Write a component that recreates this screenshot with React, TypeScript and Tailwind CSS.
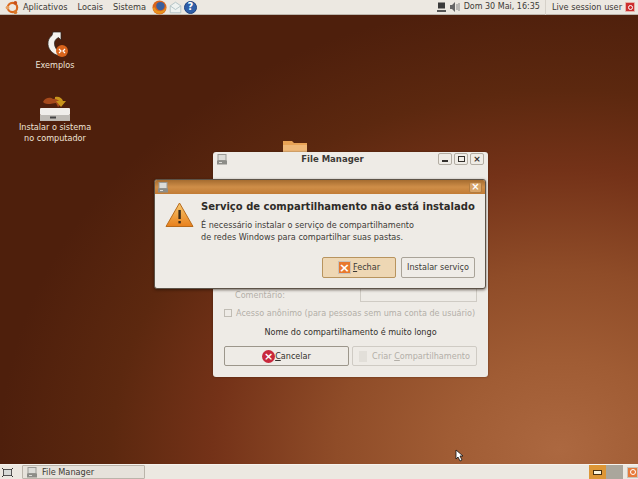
import React from "react";

const F = "font-['DejaVu_Sans',sans-serif]";

function Ubuntu() {
  return (
    <svg width="15" height="15" viewBox="0 0 24 24" className="shrink-0">
      <circle cx="12" cy="12" r="7.5" fill="none" stroke="#d9691e" strokeWidth="3.5" />
      <circle cx="4" cy="12" r="3" fill="#e8a060" />
      <circle cx="16.5" cy="4.5" r="3" fill="#c8501a" />
      <circle cx="16.5" cy="19.5" r="3" fill="#d9792a" />
    </svg>
  );
}

function Firefox() {
  return (
    <svg width="15" height="15" viewBox="0 0 16 16" className="shrink-0">
      <circle cx="8" cy="8" r="7.5" fill="#d9641c" />
      <circle cx="9" cy="6.5" r="4.5" fill="#3a5f9e" />
      <path d="M1 9c1 5 6 7 10 5 3-1 4-4 4-7-1 3-3 5-6 5-3 0-5-1-6-4-1 0-2 0-2 1z" fill="#e8941e" />
    </svg>
  );
}

function Mail() {
  return (
    <svg width="13" height="13" viewBox="0 0 16 16" className="shrink-0">
      <path d="M1.5 6 8 1.5 14.5 6v8.5h-13z" fill="#eef2f0" stroke="#a9bcc0" />
      <path d="M1.5 6 8 10.5 14.5 6" fill="none" stroke="#a9bcc0" />
    </svg>
  );
}

function Help() {
  return (
    <div className="w-[13px] h-[13px] rounded-full bg-[#2f5fa8] border border-[#1f4280] flex items-center justify-center text-white text-[10px] font-bold leading-none shrink-0">
      ?
    </div>
  );
}

function TopPanel() {
  return (
    <div className={`${F} h-[15px] shrink-0 bg-[#ece8e1] flex items-center text-[8.2px] text-[#3c3a36] border-b border-[#bdb6ad]`}>
      <div className="flex items-center pl-[5px] w-[147px]">
        <Ubuntu />
        <span className="ml-[3px]">Aplicativos</span>
        <span className="ml-[10px]">Locais</span>
        <span className="ml-[10px]">Sistema</span>
      </div>
      <div className="flex items-center gap-[2px] ml-[5px]">
        <Firefox />
        <Mail />
        <Help />
      </div>
      <div className="ml-auto flex items-center">
        <svg width="9" height="10" viewBox="0 0 9 10" className="mr-[4px]">
          <rect x="1" y="0.5" width="7" height="6" fill="#3a3a3a" />
          <rect x="0" y="8" width="9" height="2" fill="#555" />
        </svg>
        <svg width="11" height="10" viewBox="0 0 11 10" className="mr-[3px]">
          <path d="M0 3h2l3-3v10L2 7H0z" fill="#666" />
          <path d="M7 2l0 6M9 1l0 8" stroke="#888" strokeWidth="1" />
        </svg>
        <span className="text-[8px]">Dom 30 Mai, 16:35</span>
        <div className="w-px h-[15px] bg-[#d6d1c9] mx-[5px]" />
        <span className="ml-[1px]">Live session user</span>
        <div className="w-[10px] h-[10px] ml-[3px] mr-[3px] bg-[#cc2f2f] border border-[#e8b0a8] rounded-[1px] flex items-center justify-center">
          <div className="w-[5px] h-[5px] rounded-full border border-white" />
        </div>
      </div>
    </div>
  );
}

function BottomPanel() {
  return (
    <div className={`${F} h-[15px] shrink-0 bg-[#ece8e1] border-t border-[#f6f3ee] flex items-center text-[8.2px] text-[#3c3a36]`}>
      <svg width="11" height="9" viewBox="0 0 11 9" className="ml-[2px]">
        <rect x="1.5" y="1.5" width="8" height="6" fill="#d8dbd8" stroke="#555" />
        <path d="M0 0l2 2M11 0L9 2M0 9l2-2M11 9L9 7" stroke="#333" />
      </svg>
      <div className="ml-[9px] w-[123px] h-[14px] bg-[#e6e2db] border border-[#bab4aa] rounded-[1px] flex items-center pl-[4px]">
        <WinIcon />
        <span className="ml-[5px]">File Manager</span>
      </div>
      <div className="ml-auto flex items-center h-full">
        <div className="w-[17px] h-full bg-[#dd9636] flex items-center justify-center">
          <div className="w-[9px] h-[5px] bg-[#fbf4dc] border border-[#4a3010]" />
        </div>
        <div className="w-[17px] h-full bg-[#aaa69c]" />
        <div className="w-[4px]" />
        <div className="w-[11px] h-[11px] bg-[#e87a3a] border border-[#c9c2b8] flex items-center justify-center">
          <div className="w-[6px] h-[6px] rounded-full border border-white" />
        </div>
      </div>
    </div>
  );
}

function WinIcon() {
  return (
    <svg width="10" height="11" viewBox="0 0 10 11" className="shrink-0">
      <rect x="1" y="0.5" width="8" height="6" fill="#dcdcd8" stroke="#9a9a96" />
      <rect x="0" y="6.5" width="10" height="4" fill="#8d8d88" />
      <rect x="2" y="8" width="3" height="1" fill="#dcdcd8" />
    </svg>
  );
}

function WinButton({ children }: { children: React.ReactNode }) {
  return (
    <div className="w-[14px] h-[12px] border border-[#b3ada3] bg-[#efece6] rounded-[2px] flex items-center justify-center text-[#33302c] text-[9px] font-bold leading-none">
      {children}
    </div>
  );
}

function FileManager() {
  return (
    <div className={`${F} absolute left-[213px] top-[137px] w-[275px] h-[225px] bg-[#eeebe6] rounded-[3px] shadow-[0_0_2px_rgba(40,20,10,0.6)] flex flex-col text-[8.1px] text-[#3c3a36]`}>
      <div className="h-[12px] mt-px flex items-center px-[4px]">
        <WinIcon />
        <div className="flex-1 text-center font-bold text-[8.5px] text-[#3c3a36]">File Manager</div>
        <div className="flex gap-[2px]">
          <WinButton><div className="w-[6px] h-[2px] bg-[#33302c] mt-[4px]" /></WinButton>
          <WinButton><div className="w-[7px] h-[6px] border border-[#33302c]" /></WinButton>
          <WinButton>×</WinButton>
        </div>
      </div>
      <div className="mt-auto flex flex-col px-[11px] pb-[11px] text-[#b3afa8]">
        <div className="flex items-center justify-between pl-[11px] pr-0">
          <span>Comentário:</span>
          <div className="w-[117px] h-[14px] border border-[#cfcbc4] bg-[#eeebe6]" />
        </div>
        <div className="flex items-center mt-[5px] whitespace-nowrap">
          <div className="w-[8px] h-[8px] border border-[#c0bcb4] mr-[4px] shrink-0" />
          <span>Acesso anônimo (para pessoas sem uma conta de usuário)</span>
        </div>
        <div className="text-center text-[#33302c] mt-[7px] h-[12px] leading-[12px]">Nome do compartilhamento é muito longo</div>
        <div className="flex justify-between mt-[8px]">
          <div className="w-[125px] h-[20px] border border-[#9c968b] rounded-[2px] bg-[#eeebe6] flex items-center justify-center text-[#33302c]">
            <div className="w-[13px] h-[13px] rounded-full bg-[#c8283c] text-white flex items-center justify-center text-[11px] font-bold leading-none">×</div>
            <span><u>C</u>ancelar</span>
          </div>
          <div className="w-[125px] h-[20px] border border-[#cfcbc4] rounded-[2px] flex items-center justify-center">
            <span className="mr-[5px] w-[8px] h-[11px] bg-[#e2dfd9] block" />
            <span>Criar <u>C</u>ompartilhamento</span>
          </div>
        </div>
      </div>
    </div>
  );
}

function Alert() {
  return (
    <div className={`${F} absolute left-[154px] top-[164px] w-[332px] h-[110px] bg-[#eeebe6] rounded-[3px] border border-[#5d5348] shadow-[0_1px_3px_rgba(30,15,5,0.6)] flex flex-col text-[8.1px] text-[#3c3a36]`}>
      <div className="h-[14px] shrink-0 bg-gradient-to-b from-[#a56c30] via-[#cf8e48] to-[#c27c35] flex items-center justify-between px-[3px] rounded-t-[2px]">
        <WinIcon />
        <div className="w-[13px] h-[11px] bg-[#d8a468] border border-[#b27c40] rounded-[2px] text-white text-[10px] font-bold leading-none flex items-center justify-center">×</div>
      </div>
      <div className="flex pl-[10px] pt-[6px] pr-[10px]">
        <svg width="29" height="26" viewBox="0 0 29 26" className="shrink-0 mt-[2px]">
          <defs>
            <linearGradient id="w" x1="0" y1="0" x2="0" y2="1">
              <stop offset="0" stopColor="#f6c870" />
              <stop offset="1" stopColor="#e8801c" />
            </linearGradient>
          </defs>
          <path d="M14.5 1 28 24.5H1z" fill="url(#w)" stroke="#b86a1a" strokeLinejoin="round" />
          <rect x="13.4" y="8" width="2.4" height="9" fill="#3a2a18" />
          <rect x="13.4" y="19" width="2.4" height="2.4" fill="#3a2a18" />
        </svg>
        <div className="ml-[7px] whitespace-nowrap">
          <div className="font-bold text-[10px] leading-[14px] text-[#2e2c28]">Serviço de compartilhamento não está instalado</div>
          <div className="mt-[6px] leading-[11.5px]">
            É necessário instalar o serviço de compartilhamento
            <br />
            de redes Windows para compartilhar suas pastas.
          </div>
        </div>
      </div>
      <div className="mt-auto mb-[10px] mr-[10px] flex justify-end gap-[5px]">
        <div className="w-[74px] h-[21px] border border-[#b8945e] rounded-[2px] bg-[#eed7b4] flex items-center justify-center">
          <div className="w-[13px] h-[13px] bg-[#e8782c] border border-[#c9c2b8] text-white text-[13px] font-bold leading-none flex items-center justify-center mr-[2px]">×</div>
          <span><u>F</u>echar</span>
        </div>
        <div className="w-[74px] h-[21px] border border-[#a9a398] rounded-[2px] bg-[#efece7] flex items-center justify-center">Instalar serviço</div>
      </div>
    </div>
  );
}

function DesktopIcon({ icon, label, className }: { icon: React.ReactNode; label: React.ReactNode; className: string }) {
  return (
    <div className={`${F} absolute flex flex-col items-center text-[8.1px] leading-[10.5px] text-center text-[#eee3d6] whitespace-nowrap ${className}`}>
      {icon}
      <div>{label}</div>
    </div>
  );
}

export default function App() {
  return (
    <div className="w-[638px] h-[479px] overflow-hidden flex flex-col bg-[#4e1f0c]">
      <TopPanel />
      <div className="relative flex-1 bg-[radial-gradient(ellipse_560px_450px_at_560px_435px,#ac6840_0%,#a05c34_20%,#8f4c28_40%,#743218_62%,#5c280f_80%,#4e1f0c_100%)]">
        <DesktopIcon
          className="left-[25px] top-[15px] w-[60px]"
          icon={
            <svg width="30" height="30" viewBox="0 0 30 30">
              <path d="M13 2h8v8l-2.5-2.5c-3 1.5-4.5 4-4 7 .4 3 2 5 4.5 7l-1 4c-5-1.5-9.5-5.500-10-11-.3-4 1.500-7.500 4-9z" fill="#f4f2ee" stroke="#2a2420" strokeWidth="0.7" />
              <circle cx="22" cy="21" r="6" fill="#d9641c" />
              <path d="M19 19l2 2-2 2M25 19l-2 2 2 2" stroke="#fff" fill="none" strokeWidth="1.2" />
            </svg>
          }
          label="Exemplos"
        />
        <DesktopIcon
          className="left-[15px] top-[79px] w-[80px]"
          icon={
            <svg width="32" height="29" viewBox="0 0 32 29" className="-mb-[1px]">
              <path d="M4 8c2-5 8-5 10-3l6-1 4 4-5 5-2-4c-3 0-4 1-6 1-3 0-5 0-7-2z" fill="#a64a1c" />
              <path d="M16 3c4-1 7 1 8 4h3l-5 6-5-6h3c-1-1-2-2-4-2z" fill="#c9951c" />
              <rect x="1" y="14" width="30" height="7" rx="1" fill="#f0eeea" />
              <rect x="1" y="21" width="30" height="6" fill="#bfbcb6" />
              <rect x="11" y="22.5" width="6" height="2" fill="#444" />
            </svg>
          }
          label={<>Instalar o sistema<br />no computador</>}
        />
        <svg width="26" height="14" viewBox="0 0 26 14" className="absolute left-[282px] top-[124px]">
          <path d="M1 14V2h9l2 2h13v10z" fill="#e8a356" />
          <path d="M1 6h24v8H1z" fill="#efb878" />
        </svg>
        <FileManager />
        <Alert />
        <svg width="9" height="13" viewBox="0 0 9 13" className="absolute left-[455px] top-[434px]">
          <path d="M1 1v9l2-2 2 4 2-1-2-4h3z" fill="#fff" stroke="#111" strokeWidth="0.8" />
        </svg>
      </div>
      <BottomPanel />
    </div>
  );
}
